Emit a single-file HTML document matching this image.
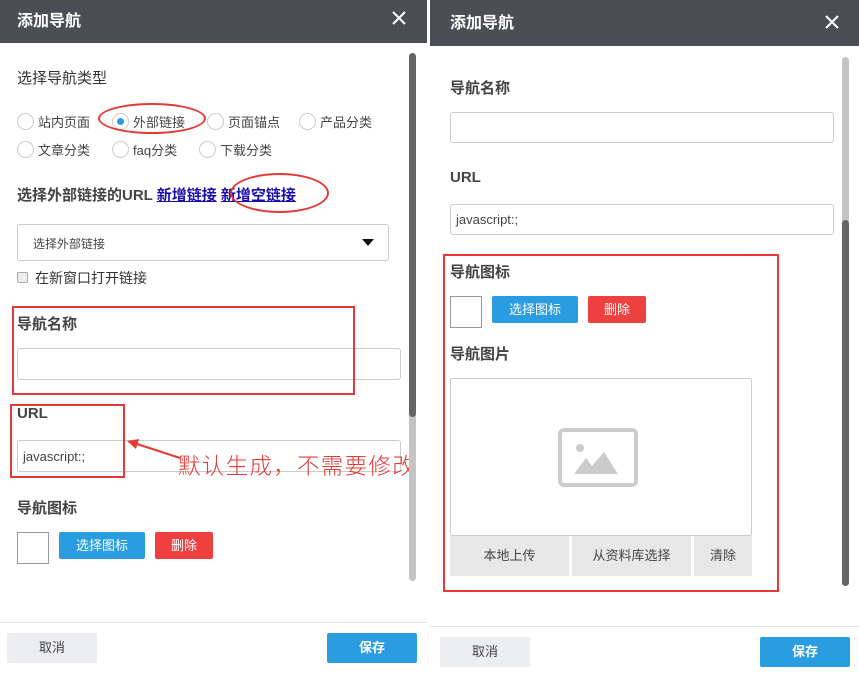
<!DOCTYPE html><html><head><meta charset="utf-8"><style>
*{margin:0;padding:0;box-sizing:border-box}
body{width:859px;height:678px;background:#fff;position:relative;overflow:hidden;font-family:"Liberation Sans","Noto Sans CJK SC",sans-serif;color:#333}
.a{position:absolute}
.hd{background:#4b4e54;color:#fff;font-weight:bold;font-size:16px}
.lb{font-size:15px;font-weight:bold;color:#444}
.in{border:1px solid #ccc;border-radius:3px;background:#fff}
.btn{color:#fff;font-size:13px;text-align:center;border-radius:2px}
.rd{border:2px solid #e53935}
.r{font-size:13px;color:#444;display:flex;align-items:center}
.r i{display:inline-block;width:17px;height:17px;border:1px solid #ccc;border-radius:50%;margin-right:4px;background:#fff;position:relative}
.dot::after{content:"";position:absolute;left:4px;top:4px;width:7px;height:7px;border-radius:50%;background:#2a9de0}
.el{border:2px solid #e53935;border-radius:50%}
</style></head><body>
<!-- LEFT -->
<div class="a hd" style="left:0;top:0;width:427px;height:43px;padding:7px 17px">添加导航</div>
<svg class="a" style="left:392px;top:11px" width="14" height="14"><path d="M1 1L13 13M13 1L1 13" stroke="#fff" stroke-width="2"/></svg>
<div class="a lb" style="left:17px;top:67px;font-weight:normal;color:#333">选择导航类型</div>
<div class="a r" style="left:17px;top:112px"><i></i>站内页面</div>
<div class="a r" style="left:112px;top:112px"><i class="dot"></i>外部链接</div>
<div class="a r" style="left:207px;top:112px"><i></i>页面锚点</div>
<div class="a r" style="left:299px;top:112px"><i></i>产品分类</div>
<div class="a r" style="left:17px;top:140px"><i></i>文章分类</div>
<div class="a r" style="left:112px;top:140px"><i></i>faq分类</div>
<div class="a r" style="left:199px;top:140px"><i></i>下载分类</div>
<div class="a el" style="left:98px;top:103px;width:108px;height:31px"></div>
<div class="a lb" style="left:17px;top:184px">选择外部链接的URL <span style="color:#1a0dab;text-decoration:underline">新增链接</span> <span style="color:#1a0dab;text-decoration:underline">新增空链接</span></div>
<div class="a el" style="left:230px;top:173px;width:99px;height:40px"></div>
<div class="a in" style="left:17px;top:224px;width:372px;height:37px;font-size:12px;padding:10px 15px;color:#444">选择外部链接</div>
<svg class="a" style="left:362px;top:239px" width="12" height="7"><path d="M0 0H12L6 7Z" fill="#111"/></svg>
<div class="a" style="left:17px;top:272px;width:11px;height:11px;border:1px solid #aaa;background:#eee;border-radius:2px"></div>
<div class="a" style="left:35px;top:268px;font-size:14px">在新窗口打开链接</div>
<div class="a lb" style="left:17px;top:313px">导航名称</div>
<div class="a in" style="left:17px;top:348px;width:384px;height:32px"></div>
<div class="a rd" style="left:12px;top:306px;width:343px;height:89px"></div>
<div class="a lb" style="left:17px;top:405px">URL</div>
<div class="a in" style="left:17px;top:440px;width:384px;height:32px;font-size:13px;padding:8px 5px;color:#444">javascript:;</div>
<div class="a rd" style="left:10px;top:404px;width:115px;height:74px"></div>
<svg class="a" style="left:125px;top:436px" width="60" height="30"><line x1="55" y1="22" x2="6" y2="6" stroke="#e53935" stroke-width="2"/><polygon points="2,5 14,3 11,13" fill="#e53935"/></svg>
<div class="a" style="left:178px;top:449px;font-size:22.5px;color:#e53935;white-space:nowrap;letter-spacing:1.3px;font-family:'Noto Sans CJK SC',sans-serif;font-weight:300">默认生成，不需要修改</div>
<div class="a lb" style="left:17px;top:497px">导航图标</div>
<div class="a" style="left:17px;top:532px;width:32px;height:32px;border:1px solid #999"></div>
<div class="a btn" style="left:59px;top:532px;width:86px;height:27px;background:#2a9de0;line-height:27px">选择图标</div>
<div class="a btn" style="left:155px;top:532px;width:58px;height:27px;background:#ef4040;line-height:27px">删除</div>
<div class="a" style="left:409px;top:53px;width:7px;height:528px;background:#c4c4c4;border-radius:4px"></div>
<div class="a" style="left:409px;top:53px;width:7px;height:364px;background:#666;border-radius:4px"></div>
<div class="a" style="left:0;top:622px;width:427px;height:1px;background:#e4e4e4"></div>
<div class="a btn" style="left:7px;top:633px;width:90px;height:30px;background:#eceef1;color:#444;line-height:30px">取消</div>
<div class="a btn" style="left:327px;top:633px;width:90px;height:30px;background:#2a9de0;line-height:30px;font-weight:bold">保存</div>
<!-- RIGHT -->
<div class="a hd" style="left:430px;top:0;width:429px;height:46px;padding:9px 20px">添加导航</div>
<svg class="a" style="left:825px;top:15px" width="14" height="14"><path d="M1 1L13 13M13 1L1 13" stroke="#fff" stroke-width="2"/></svg>
<div class="a lb" style="left:450px;top:77px">导航名称</div>
<div class="a in" style="left:450px;top:112px;width:384px;height:31px"></div>
<div class="a lb" style="left:450px;top:169px">URL</div>
<div class="a in" style="left:450px;top:204px;width:384px;height:31px;font-size:13px;padding:7px 5px;color:#444">javascript:;</div>
<div class="a rd" style="left:443px;top:254px;width:336px;height:338px"></div>
<div class="a lb" style="left:450px;top:261px">导航图标</div>
<div class="a" style="left:450px;top:296px;width:32px;height:32px;border:1px solid #999"></div>
<div class="a btn" style="left:492px;top:296px;width:86px;height:27px;background:#2a9de0;line-height:27px">选择图标</div>
<div class="a btn" style="left:588px;top:296px;width:58px;height:27px;background:#ef4040;line-height:27px">删除</div>
<div class="a lb" style="left:450px;top:343px">导航图片</div>
<div class="a" style="left:450px;top:378px;width:302px;height:158px;border:1px solid #ccc;border-radius:2px"></div>
<svg class="a" style="left:558px;top:428px" width="80" height="60"><rect x="2" y="2" width="76" height="55" rx="4" fill="none" stroke="#ccc" stroke-width="4"/><circle cx="22" cy="20" r="4" fill="#ccc"/><polygon points="16,46 28,30 34,38 46,24 60,46" fill="#ccc"/></svg>
<div class="a" style="left:450px;top:536px;width:119px;height:40px;background:#e8e8e8;font-size:13px;text-align:center;line-height:40px;color:#444">本地上传</div>
<div class="a" style="left:572px;top:536px;width:119px;height:40px;background:#e8e8e8;font-size:13px;text-align:center;line-height:40px;color:#444">从资料库选择</div>
<div class="a" style="left:694px;top:536px;width:58px;height:40px;background:#e8e8e8;font-size:13px;text-align:center;line-height:40px;color:#444">清除</div>
<div class="a" style="left:842px;top:57px;width:7px;height:529px;background:#c4c4c4;border-radius:4px"></div>
<div class="a" style="left:842px;top:220px;width:7px;height:366px;background:#666;border-radius:4px"></div>
<div class="a" style="left:430px;top:626px;width:429px;height:1px;background:#e4e4e4"></div>
<div class="a btn" style="left:440px;top:637px;width:90px;height:30px;background:#eceef1;color:#444;line-height:30px">取消</div>
<div class="a btn" style="left:760px;top:637px;width:90px;height:30px;background:#2a9de0;line-height:30px;font-weight:bold">保存</div>
</body></html>
